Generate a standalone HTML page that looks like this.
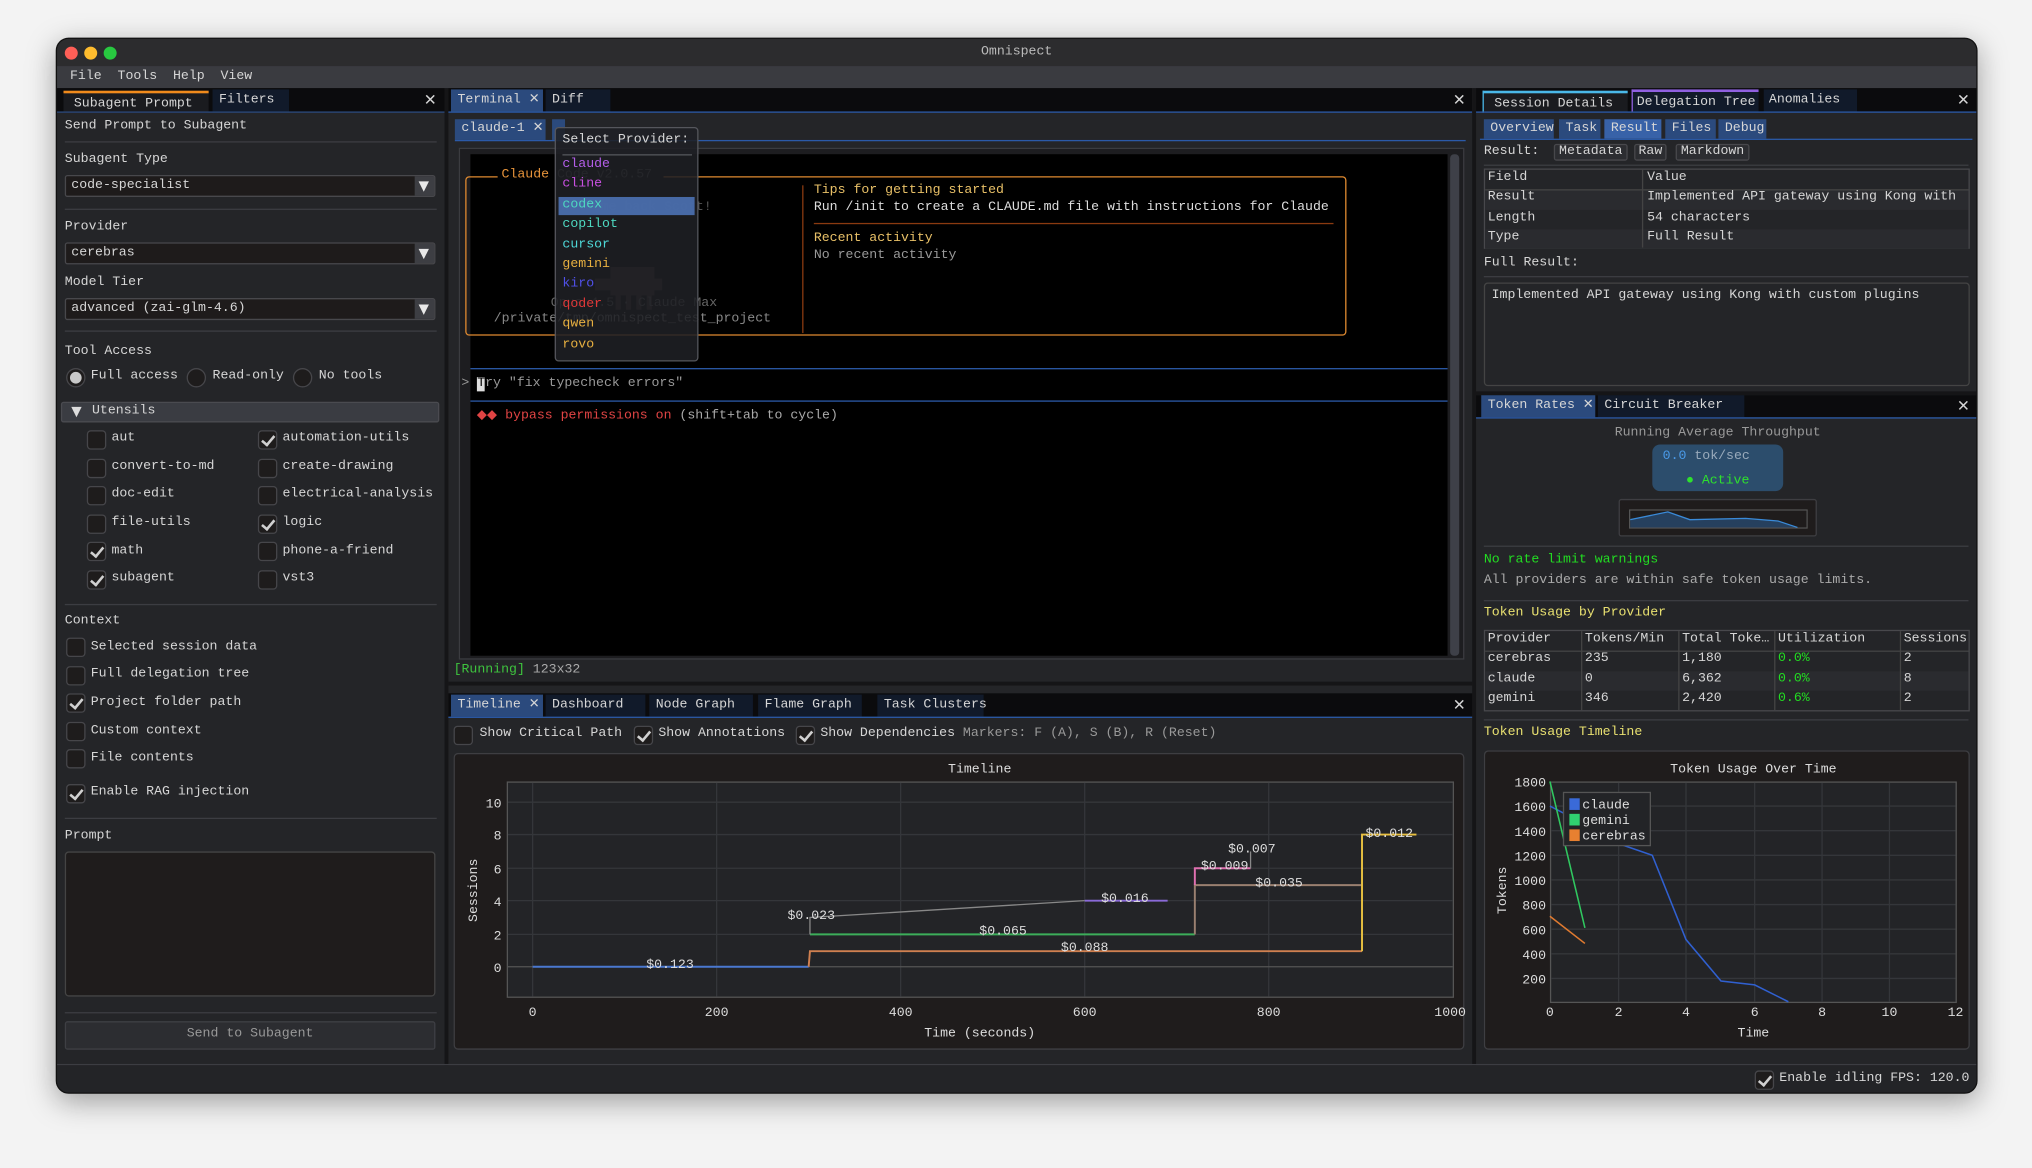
<!DOCTYPE html>
<html><head><meta charset="utf-8">
<style>
*{box-sizing:border-box;margin:0;padding:0}
html,body{width:2032px;height:1167px;overflow:hidden;background:#f3f3f3}
#s{position:absolute;left:0;top:0;width:1568px;height:901px;transform:scale(1.29592);transform-origin:0 0;font-family:"Liberation Mono",monospace;font-size:10.2px;color:#d6d6d6}
.a{position:absolute}
.t{position:absolute;white-space:pre;line-height:12px}
.win{left:43px;top:29px;width:1483px;height:815px;border-radius:10px;background:#242528;overflow:hidden;box-shadow:0 6px 22px rgba(0,0,0,.35);border:1px solid #111}
.tab{position:absolute;height:17px;line-height:17px;padding-left:5px;white-space:pre;background:#111a2a}
.tab.on{background:#2b4a7d}
.sep{position:absolute;height:1px;background:#3c3d42}
.combo{position:absolute;height:17px;background:#1e1b1b;border:1px solid #48484c;border-radius:2px;line-height:15px;padding-left:4px;white-space:pre}
.combo b{position:absolute;right:0;top:0;width:15px;height:15px;background:#3d3e43}
.combo b:after{content:"";position:absolute;left:3px;top:4px;border-left:4.5px solid transparent;border-right:4.5px solid transparent;border-top:8px solid #e8e8e8}
.cb{position:absolute;width:15px;height:15px;background:#1e1c1c;border:1px solid #46464a;border-radius:3px}
.cb.k:after{content:"";position:absolute;left:4px;top:1px;width:4px;height:8px;border-right:2px solid #d0d0d0;border-bottom:2px solid #d0d0d0;transform:rotate(40deg)}
.x{position:absolute;font-size:12px;line-height:12px}
.bl{position:absolute;height:1px;background:#2b5aa8}
</style></head><body><div id="s">
<div class="a win">
<div class="a" style="left:0;top:0;width:1483px;height:21px;background:#2c2c2e"></div>
<div class="a" style="left:6px;top:6px;width:10px;height:10px;border-radius:5px;background:#fe5f57"></div>
<div class="a" style="left:21px;top:6px;width:10px;height:10px;border-radius:5px;background:#febc2e"></div>
<div class="a" style="left:36px;top:6px;width:10px;height:10px;border-radius:5px;background:#28c840"></div>
<div class="t" style="left:713px;top:5px;color:#bbb">Omnispect</div>
<div class="a" style="left:0;top:21px;width:1483px;height:17px;background:#3a3b40"></div>
<div class="t" style="left:10px;top:24px">File  Tools  Help  View</div>

<div class="a" style="left:0;top:38px;width:299px;height:18px;background:#0b0b0d"></div>
<div class="tab" style="left:5px;top:40px;width:112px;background:#1a1b1f;border-top:2px solid #f08a1c;padding-left:8px">Subagent Prompt</div>
<div class="tab" style="left:120px;top:39px;width:59px">Filters</div>
<div class="x" style="left:283px;top:42px">✕</div>
<div class="a" style="left:0;top:56px;width:299px;height:1px;background:#2b4a7d"></div>
<div class="a" style="left:299px;top:38px;width:3px;height:755px;background:#151517"></div>
<div class="t" style="left:6px;top:62px">Send Prompt to Subagent</div>
<div class="sep" style="left:6px;top:79px;width:287px"></div>
<div class="t" style="left:6px;top:88px">Subagent Type</div>
<div class="combo" style="left:6px;top:105px;width:286px">code-specialist<b></b></div>
<div class="sep" style="left:6px;top:131px;width:287px"></div>
<div class="t" style="left:6px;top:140px">Provider</div>
<div class="combo" style="left:6px;top:157px;width:286px">cerebras<b></b></div>
<div class="t" style="left:6px;top:183px">Model Tier</div>
<div class="combo" style="left:6px;top:200px;width:286px">advanced (zai-glm-4.6)<b></b></div>
<div class="sep" style="left:6px;top:225px;width:287px"></div>
<div class="t" style="left:6px;top:236px">Tool Access</div>
<div class="a" style="left:7px;top:254px;width:15px;height:15px;border-radius:8px;background:#1e1c1c;border:1px solid #46464a"><div class="a" style="left:2px;top:2px;width:9px;height:9px;border-radius:5px;background:#c8c8c8"></div></div>
<div class="t" style="left:26px;top:255px">Full access</div>
<div class="a" style="left:100px;top:254px;width:15px;height:15px;border-radius:8px;background:#1e1c1c;border:1px solid #46464a"></div>
<div class="t" style="left:120px;top:255px">Read-only</div>
<div class="a" style="left:182px;top:254px;width:15px;height:15px;border-radius:8px;background:#1e1c1c;border:1px solid #46464a"></div>
<div class="t" style="left:202px;top:255px">No tools</div>
<div class="a" style="left:3px;top:280px;width:292px;height:16px;background:#3a3c42;border:1px solid #4a4b50;border-radius:2px"></div>
<div class="a" style="left:11px;top:284px;border-left:4.5px solid transparent;border-right:4.5px solid transparent;border-top:8px solid #ddd"></div>
<div class="t" style="left:27px;top:282px">Utensils</div>
<div class="cb" style="left:23px;top:302px"></div><div class="t" style="left:42px;top:303px">aut</div>
<div class="cb k" style="left:155px;top:302px"></div><div class="t" style="left:174px;top:303px">automation-utils</div>
<div class="cb" style="left:23px;top:324px"></div><div class="t" style="left:42px;top:325px">convert-to-md</div>
<div class="cb" style="left:155px;top:324px"></div><div class="t" style="left:174px;top:325px">create-drawing</div>
<div class="cb" style="left:23px;top:345px"></div><div class="t" style="left:42px;top:346px">doc-edit</div>
<div class="cb" style="left:155px;top:345px"></div><div class="t" style="left:174px;top:346px">electrical-analysis</div>
<div class="cb" style="left:23px;top:367px"></div><div class="t" style="left:42px;top:368px">file-utils</div>
<div class="cb k" style="left:155px;top:367px"></div><div class="t" style="left:174px;top:368px">logic</div>
<div class="cb k" style="left:23px;top:388px"></div><div class="t" style="left:42px;top:390px">math</div>
<div class="cb" style="left:155px;top:388px"></div><div class="t" style="left:174px;top:390px">phone-a-friend</div>
<div class="cb k" style="left:23px;top:410px"></div><div class="t" style="left:42px;top:411px">subagent</div>
<div class="cb" style="left:155px;top:410px"></div><div class="t" style="left:174px;top:411px">vst3</div>
<div class="sep" style="left:6px;top:436px;width:287px"></div>
<div class="t" style="left:6px;top:444px">Context</div>
<div class="cb" style="left:7px;top:462px"></div><div class="t" style="left:26px;top:464px">Selected session data</div>
<div class="cb" style="left:7px;top:484px"></div><div class="t" style="left:26px;top:485px">Full delegation tree</div>
<div class="cb k" style="left:7px;top:505px"></div><div class="t" style="left:26px;top:507px">Project folder path</div>
<div class="cb" style="left:7px;top:527px"></div><div class="t" style="left:26px;top:529px">Custom context</div>
<div class="cb" style="left:7px;top:548px"></div><div class="t" style="left:26px;top:550px">File contents</div>
<div class="cb k" style="left:7px;top:575px"></div><div class="t" style="left:26px;top:576px">Enable RAG injection</div>
<div class="sep" style="left:6px;top:601px;width:287px"></div>
<div class="t" style="left:6px;top:610px">Prompt</div>
<div class="a" style="left:6px;top:627px;width:286px;height:112px;background:#1f1c1c;border:1px solid #444;border-radius:3px"></div>
<div class="sep" style="left:6px;top:751px;width:287px"></div>
<div class="a" style="left:6px;top:758px;width:286px;height:22px;background:#2c2d31;border:1px solid #3e3f44;border-radius:2px;color:#999;text-align:center;line-height:20px">Send to Subagent</div>

<div class="a" style="left:302px;top:38px;width:790px;height:18px;background:#0b0b0d"></div>
<div class="tab on" style="left:304px;top:39px;width:71px">Terminal ✕</div>
<div class="tab" style="left:377px;top:39px;width:50px">Diff</div>
<div class="x" style="left:1077px;top:42px">✕</div>
<div class="bl" style="left:302px;top:56px;width:790px"></div>
<div class="a" style="left:1092px;top:38px;width:3px;height:755px;background:#151517"></div>
<div class="tab on" style="left:307px;top:62px;width:70px;height:16px;line-height:16px">claude-1 ✕</div>
<div class="a" style="left:382px;top:62px;width:10px;height:16px;background:#2b4a7d"></div>
<div class="bl" style="left:307px;top:78px;width:780px"></div>
<div class="a" style="left:310px;top:84px;width:776px;height:395px;border:1px solid #3b3c40;background:#1d1d20"></div>
<div class="a" style="left:319px;top:89px;width:754px;height:387px;background:#000"></div>
<div class="a" style="left:1075px;top:89px;width:7px;height:387px;background:#3e4048;border-radius:3px"></div>
<div class="a" style="left:315px;top:106px;width:680px;height:123px;border:1px solid #e08a30;border-radius:3px"></div>
<div class="t" style="left:340px;top:100px;background:#000;padding:0 3px"><span style="color:#e6933a">Claude</span><span style="color:#555"> Code v2.0.57 </span></div>
<div class="a" style="left:575px;top:113px;width:1px;height:114px;background:#8a3a10"></div>
<div class="t" style="left:389px;top:125px;color:#555">Welcome back Scott!</div>
<div class="a" style="left:427px;top:176px;width:34px;height:22px;background:#3a2e2c"></div>
<div class="a" style="left:415px;top:185px;width:52px;height:9px;background:#3a2e2c"></div>
<div class="a" style="left:431px;top:198px;width:4px;height:11px;background:#3a2e2c"></div>
<div class="a" style="left:439px;top:198px;width:4px;height:11px;background:#3a2e2c"></div>
<div class="a" style="left:447px;top:198px;width:4px;height:11px;background:#3a2e2c"></div>
<div class="a" style="left:455px;top:198px;width:4px;height:11px;background:#3a2e2c"></div>
<div class="t" style="left:381px;top:199px;color:#666">Opus 4.5 · Claude Max</div>
<div class="t" style="left:337px;top:211px;color:#888">/private/tmp/omnispect_test_project</div>
<div class="t" style="left:584px;top:112px;color:#e8c067">Tips for getting started</div>
<div class="t" style="left:584px;top:125px;color:#ddd">Run /init to create a CLAUDE.md file with instructions for Claude</div>
<div class="a" style="left:584px;top:142px;width:401px;height:1px;background:#8a3a10"></div>
<div class="t" style="left:584px;top:149px;color:#e8c067">Recent activity</div>
<div class="t" style="left:584px;top:162px;color:#999">No recent activity</div>
<div class="bl" style="left:319px;top:254px;width:754px"></div>
<div class="t" style="left:312px;top:261px;color:#999">> <span style="background:#ddd;color:#000">T</span>ry "fix typecheck errors"</div>
<div class="bl" style="left:319px;top:279px;width:754px"></div>
<div class="t" style="left:324px;top:286px"><span style="color:#e04444">◆◆ bypass permissions on</span><span style="color:#aaa"> (shift+tab to cycle)</span></div>
<div class="t" style="left:306px;top:482px"><span style="color:#3ec43e">[Running]</span><span style="color:#aaa"> 123x32</span></div>
<div class="a" style="left:384px;top:68px;width:111px;height:181px;background:rgba(31,32,36,.88);border:1px solid #55565c;border-radius:3px"></div>
<div class="t" style="left:390px;top:73px">Select Provider:</div>
<div class="a" style="left:390px;top:89px;width:100px;height:1px;background:#55565c"></div>
<div class="a" style="left:387px;top:122px;width:105px;height:14px;background:rgba(76,114,180,.9)"></div>
<div class="t" style="left:390px;top:92px;color:#b35ee8">claude</div>
<div class="t" style="left:390px;top:107px;color:#c850e0">cline</div>
<div class="t" style="left:390px;top:123px;color:#4ed8c0">codex</div>
<div class="t" style="left:390px;top:138px;color:#4ed8c0">copilot</div>
<div class="t" style="left:390px;top:154px;color:#4ed8d8">cursor</div>
<div class="t" style="left:390px;top:169px;color:#e8b040">gemini</div>
<div class="t" style="left:390px;top:184px;color:#5050e8">kiro</div>
<div class="t" style="left:390px;top:200px;color:#e03838">qoder</div>
<div class="t" style="left:390px;top:215px;color:#e8b040">qwen</div>
<div class="t" style="left:390px;top:231px;color:#e8b040">rovo</div>
<div class="a" style="left:302px;top:496px;width:790px;height:3px;background:#151517"></div>
<div class="a" style="left:302px;top:505px;width:790px;height:18px;background:#0b0b0d"></div>
<div class="tab on" style="left:304px;top:506px;width:71px">Timeline ✕</div>
<div class="tab" style="left:377px;top:506px;width:77px">Dashboard</div>
<div class="tab" style="left:457px;top:506px;width:80px">Node Graph</div>
<div class="tab" style="left:541px;top:506px;width:80px">Flame Graph</div>
<div class="tab" style="left:633px;top:506px;width:82px">Task Clusters</div>
<div class="x" style="left:1077px;top:509px">✕</div>
<div class="bl" style="left:302px;top:523px;width:790px"></div>
<div class="cb" style="left:306px;top:530px"></div><div class="t" style="left:326px;top:531px">Show Critical Path</div>
<div class="cb k" style="left:445px;top:530px"></div><div class="t" style="left:464px;top:531px">Show Annotations</div>
<div class="cb k" style="left:570px;top:530px"></div><div class="t" style="left:589px;top:531px">Show Dependencies <span style="color:#999">Markers: F (A), S (B), R (Reset)</span></div>
<svg class="a" style="left:306px;top:551px" width="781" height="230" viewBox="349 580 781 230">
<rect x="349.5" y="580.5" width="779" height="228" rx="3" fill="#1f1c1c" stroke="#3e3e42"/>
<rect x="390.5" y="602.5" width="730" height="166" fill="#232427" stroke="#555"/>
<g stroke="#34363a" stroke-width="1">
<line x1="391" x2="1120" y1="618" y2="618"/><line x1="391" x2="1120" y1="643" y2="643"/><line x1="391" x2="1120" y1="669" y2="669"/><line x1="391" x2="1120" y1="694" y2="694"/><line x1="391" x2="1120" y1="720" y2="720"/>
<line x1="410" x2="410" y1="603" y2="768"/><line x1="552" x2="552" y1="603" y2="768"/><line x1="694" x2="694" y1="603" y2="768"/><line x1="836" x2="836" y1="603" y2="768"/><line x1="978" x2="978" y1="603" y2="768"/>
</g>
<line x1="391" x2="1120" y1="745" y2="745" stroke="#555"/>
<g font-family="Liberation Mono,monospace" font-size="10.2" fill="#ddd" text-anchor="end">
<text x="386" y="622">10</text><text x="386" y="647">8</text><text x="386" y="673">6</text><text x="386" y="698">4</text><text x="386" y="724">2</text><text x="386" y="749">0</text></g>
<g font-family="Liberation Mono,monospace" font-size="10.2" fill="#ddd" text-anchor="middle">
<text x="410" y="783">0</text><text x="552" y="783">200</text><text x="694" y="783">400</text><text x="836" y="783">600</text><text x="978" y="783">800</text><text x="1118" y="783">1000</text>
<text x="755" y="799">Time (seconds)</text><text x="755" y="595">Timeline</text>
<text transform="translate(367 686) rotate(-90)">Sessions</text></g>
<g fill="none" stroke-width="1.5">
<polyline points="410,745 623,745" stroke="#4a78d0"/>
<polyline points="623,745 624,733 1050,733" stroke="#d08050"/>
<polyline points="624,720 921,720" stroke="#3cae5a"/>
<polyline points="624,720 624,707 836,694" stroke="#888" stroke-width="1"/>
<polyline points="836,694 900,694" stroke="#8a6ad8"/>
<polyline points="921,720 921,682 1050,682" stroke="#9a8070"/>
<polyline points="921,682 921,669 964,669" stroke="#e070b0"/>
<polyline points="964,669 964,656" stroke="#888" stroke-width="1"/>
<polyline points="1050,733 1050,643 1092,643" stroke="#e8c040"/>
</g>
<g font-family="Liberation Mono,monospace" font-size="10.2" fill="#ddd" text-anchor="middle">
<text x="516" y="746">$0.123</text><text x="836" y="733">$0.088</text><text x="773" y="720">$0.065</text><text x="625" y="708">$0.023</text><text x="867" y="695">$0.016</text><text x="986" y="683">$0.035</text><text x="944" y="670">$0.009</text><text x="965" y="657">$0.007</text><text x="1071" y="645">$0.012</text></g>
</svg>

<div class="a" style="left:1095px;top:38px;width:388px;height:18px;background:#0b0b0d"></div>
<div class="tab" style="left:1100px;top:40px;width:112px;background:#1a1b1f;border-top:2px solid #4ab8e8;border-left:1px solid #4ab8e8;padding-left:8px">Session Details</div>
<div class="tab" style="left:1215px;top:39px;width:98px;border-top:2px solid #9060e0;border-left:1px solid #9060e0;padding-left:3px">Delegation Tree</div>
<div class="tab" style="left:1317px;top:39px;width:72px;padding-left:4px">Anomalies</div>
<div class="x" style="left:1466px;top:42px">✕</div>
<div class="bl" style="left:1095px;top:56px;width:388px"></div>
<div class="tab on" style="left:1101px;top:62px;width:54px;height:15px;line-height:15px">Overview</div>
<div class="tab on" style="left:1159px;top:62px;width:32px;height:15px;line-height:15px">Task</div>
<div class="tab on" style="left:1194px;top:62px;width:44px;height:15px;line-height:15px;background:#3862a8">Result</div>
<div class="tab on" style="left:1241px;top:62px;width:39px;height:15px;line-height:15px">Files</div>
<div class="tab on" style="left:1282px;top:62px;width:37px;height:15px;line-height:15px">Debug</div>
<div class="bl" style="left:1098px;top:77px;width:380px"></div>
<div class="t" style="left:1101px;top:82px">Result:</div>
<div class="a" style="left:1155px;top:81px;width:57px;height:13px;border:1px solid #48484c;background:#2c2d31;border-radius:2px;line-height:11px;text-align:center">Metadata</div>
<div class="a" style="left:1217px;top:81px;width:25px;height:13px;border:1px solid #48484c;background:#2c2d31;border-radius:2px;line-height:11px;text-align:center">Raw</div>
<div class="a" style="left:1249px;top:81px;width:57px;height:13px;border:1px solid #48484c;background:#2c2d31;border-radius:2px;line-height:11px;text-align:center">Markdown</div>
<div class="sep" style="left:1101px;top:97px;width:374px"></div>
<div class="a" style="left:1101px;top:100px;width:375px;height:62px;border:1px solid #48484c">
 <div class="a" style="left:0;top:15px;width:373px;height:16px;background:#2a2b2f"></div>
 <div class="a" style="left:0;top:46px;width:373px;height:15px;background:#2a2b2f"></div>
 <div class="a" style="left:0;top:15px;width:373px;height:1px;background:#444"></div>
 <div class="a" style="left:121px;top:0;width:1px;height:60px;background:#444"></div>
</div>
<div class="t" style="left:1104px;top:102px">Field</div><div class="t" style="left:1227px;top:102px">Value</div>
<div class="t" style="left:1104px;top:117px">Result</div><div class="t" style="left:1227px;top:117px">Implemented API gateway using Kong with</div>
<div class="t" style="left:1104px;top:133px">Length</div><div class="t" style="left:1227px;top:133px">54 characters</div>
<div class="t" style="left:1104px;top:148px">Type</div><div class="t" style="left:1227px;top:148px">Full Result</div>
<div class="t" style="left:1101px;top:168px">Full Result:</div>
<div class="sep" style="left:1101px;top:183px;width:374px"></div>
<div class="a" style="left:1101px;top:188px;width:375px;height:80px;border:1px solid #444;border-radius:3px"></div>
<div class="t" style="left:1107px;top:193px">Implemented API gateway using Kong with custom plugins</div>
<div class="a" style="left:1095px;top:272px;width:388px;height:3px;background:#151517"></div>
<div class="a" style="left:1095px;top:275px;width:388px;height:17px;background:#0b0b0d"></div>
<div class="tab on" style="left:1099px;top:275px;width:88px">Token Rates ✕</div>
<div class="tab" style="left:1189px;top:275px;width:113px">Circuit Breaker</div>
<div class="x" style="left:1466px;top:278px">✕</div>
<div class="bl" style="left:1095px;top:292px;width:388px"></div>
<div class="t" style="left:1202px;top:299px;color:#999">Running Average Throughput</div>
<div class="a" style="left:1231px;top:313px;width:101px;height:36px;background:#2c4d6c;border-radius:6px"></div>
<div class="t" style="left:1239px;top:317px"><span style="color:#4a9ae8">0.0</span><span style="color:#9ab"> tok/sec</span></div>
<div class="t" style="left:1257px;top:336px;color:#2ee02e">● Active</div>
<div class="a" style="left:1205px;top:355px;width:153px;height:29px;background:#1f1c1c;border:1px solid #3e3e42;border-radius:2px"></div>
<svg class="a" style="left:1213px;top:363px" width="138" height="15"><rect x=".5" y=".5" width="137" height="14" fill="none" stroke="#555"/><path d="M1 8 L30 2 L47 8 L90 7 L115 9 L130 14 L1 14Z" fill="#26405e"/><path d="M1 8 L30 2 L47 8 L90 7 L115 9 L130 14" fill="none" stroke="#3a8ad8"/></svg>
<div class="sep" style="left:1101px;top:391px;width:374px"></div>
<div class="t" style="left:1101px;top:397px;color:#22dd22">No rate limit warnings</div>
<div class="t" style="left:1101px;top:413px;color:#aaa">All providers are within safe token usage limits.</div>
<div class="sep" style="left:1101px;top:433px;width:374px"></div>
<div class="t" style="left:1101px;top:438px;color:#e8e070">Token Usage by Provider</div>
<div class="a" style="left:1101px;top:456px;width:375px;height:63px;border:1px solid #48484c">
 <div class="a" style="left:0;top:15px;width:373px;height:1px;background:#444"></div>
 <div class="a" style="left:0;top:31px;width:373px;height:15px;background:#2a2b2f"></div>
 <div class="a" style="left:74px;top:0;width:1px;height:61px;background:#444"></div>
 <div class="a" style="left:149px;top:0;width:1px;height:61px;background:#444"></div>
 <div class="a" style="left:223px;top:0;width:1px;height:61px;background:#444"></div>
 <div class="a" style="left:320px;top:0;width:1px;height:61px;background:#444"></div>
</div>
<div class="t" style="left:1104px;top:458px">Provider</div><div class="t" style="left:1179px;top:458px">Tokens/Min</div><div class="t" style="left:1254px;top:458px">Total Toke…</div><div class="t" style="left:1328px;top:458px">Utilization</div><div class="t" style="left:1425px;top:458px">Sessions</div>
<div class="t" style="left:1104px;top:473px">cerebras</div><div class="t" style="left:1179px;top:473px">235</div><div class="t" style="left:1254px;top:473px">1,180</div><div class="t" style="left:1328px;top:473px;color:#22dd22">0.0%</div><div class="t" style="left:1425px;top:473px">2</div>
<div class="t" style="left:1104px;top:489px">claude</div><div class="t" style="left:1179px;top:489px">0</div><div class="t" style="left:1254px;top:489px">6,362</div><div class="t" style="left:1328px;top:489px;color:#22dd22">0.0%</div><div class="t" style="left:1425px;top:489px">8</div>
<div class="t" style="left:1104px;top:504px">gemini</div><div class="t" style="left:1179px;top:504px">346</div><div class="t" style="left:1254px;top:504px">2,420</div><div class="t" style="left:1328px;top:504px;color:#22dd22">0.6%</div><div class="t" style="left:1425px;top:504px">2</div>
<div class="sep" style="left:1101px;top:525px;width:374px"></div>
<div class="t" style="left:1101px;top:530px;color:#e8e070">Token Usage Timeline</div>
<svg class="a" style="left:1101px;top:549px" width="376" height="232" viewBox="1144 578 376 232">
<rect x="1144.5" y="578.5" width="374" height="230" rx="3" fill="#1f1c1c" stroke="#3e3e42"/>
<rect x="1195.5" y="602.5" width="313" height="170" fill="#232427" stroke="#555"/>
<g stroke="#34363a"><line x1="1196" x2="1508" y1="621" y2="621"/><line x1="1196" x2="1508" y1="640" y2="640"/><line x1="1196" x2="1508" y1="659" y2="659"/><line x1="1196" x2="1508" y1="678" y2="678"/><line x1="1196" x2="1508" y1="697" y2="697"/><line x1="1196" x2="1508" y1="716" y2="716"/><line x1="1196" x2="1508" y1="735" y2="735"/><line x1="1196" x2="1508" y1="754" y2="754"/>
<line x1="1248" x2="1248" y1="603" y2="772"/><line x1="1300" x2="1300" y1="603" y2="772"/><line x1="1353" x2="1353" y1="603" y2="772"/><line x1="1405" x2="1405" y1="603" y2="772"/><line x1="1457" x2="1457" y1="603" y2="772"/></g>
<g font-family="Liberation Mono,monospace" font-size="10.2" fill="#ddd" text-anchor="end">
<text x="1192" y="606">1800</text><text x="1192" y="625">1600</text><text x="1192" y="644">1400</text><text x="1192" y="663">1200</text><text x="1192" y="682">1000</text><text x="1192" y="701">800</text><text x="1192" y="720">600</text><text x="1192" y="739">400</text><text x="1192" y="758">200</text></g>
<g font-family="Liberation Mono,monospace" font-size="10.2" fill="#ddd" text-anchor="middle">
<text x="1195" y="783">0</text><text x="1248" y="783">2</text><text x="1300" y="783">4</text><text x="1353" y="783">6</text><text x="1405" y="783">8</text><text x="1457" y="783">10</text><text x="1508" y="783">12</text>
<text x="1352" y="799">Time</text><text x="1352" y="595">Token Usage Over Time</text>
<text transform="translate(1161 686) rotate(-90)">Tokens</text></g>
<g fill="none" stroke-width="1.2">
<polyline points="1195,621 1222,635 1248,650 1274,659 1300,724 1327,756 1353,759 1379,772" stroke="#3060d0"/>
<polyline points="1195,602 1222,715" stroke="#30c860"/>
<polyline points="1195,706 1222,727" stroke="#e07a30"/></g>
<rect x="1205.5" y="610.5" width="67" height="41" fill="#232427" stroke="#555"/>
<rect x="1210" y="615" width="8" height="9" fill="#3a6ad8"/><rect x="1210" y="627" width="8" height="9" fill="#30d070"/><rect x="1210" y="639" width="8" height="9" fill="#e88030"/>
<g font-family="Liberation Mono,monospace" font-size="10.2" fill="#ddd"><text x="1220" y="623">claude</text><text x="1220" y="635">gemini</text><text x="1220" y="647">cerebras</text></g>
</svg>

<div class="a" style="left:0;top:791px;width:1483px;height:1px;background:#3c3d42"></div>
<div class="a" style="left:0;top:792px;width:1483px;height:23px;background:#232427"></div>
<div class="cb k" style="left:1310px;top:796px"></div>
<div class="t" style="left:1329px;top:797px">Enable idling FPS: 120.0</div>
</div>
</div></body></html>
